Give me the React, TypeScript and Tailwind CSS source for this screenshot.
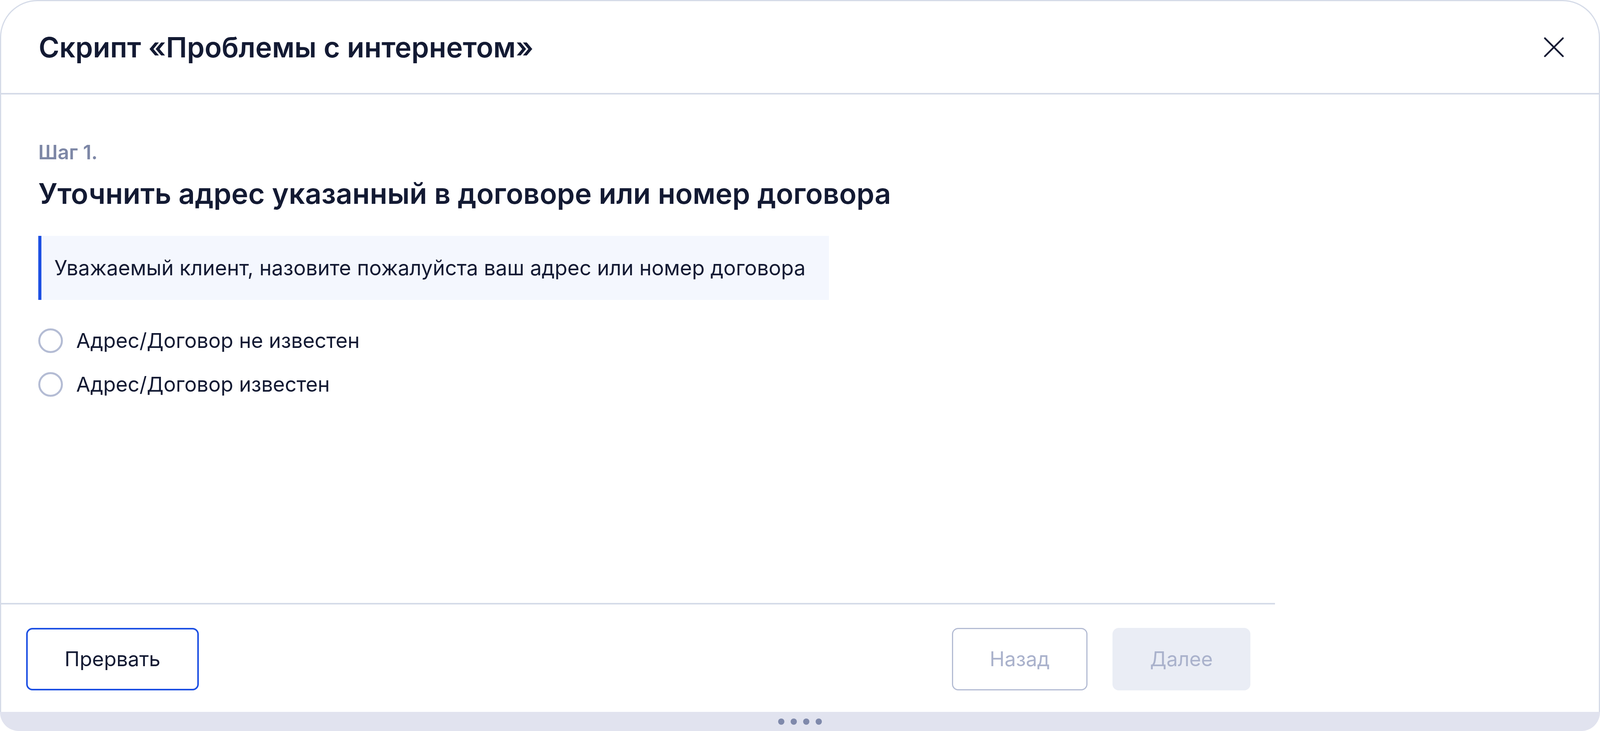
import React from 'react';

function Radio({ label }: { label: string }) {
  return (
    <div className="flex items-center gap-[34px] h-[64px]">
      <div className="w-[63px] h-[63px] rounded-full border-[5px] border-[#b4bcd4] bg-white shrink-0" />
      <span className="text-[52.5px] leading-[64px]">{label}</span>
    </div>
  );
}

export default function App() {
  return (
    <div className="relative h-[1872px] w-full bg-white font-[Inter,sans-serif] text-[#131a33] flex flex-col overflow-hidden">
      <div className="flex-1 min-h-0 flex flex-col border-x-[3px] border-t-[3px] border-[#d5dbe8] rounded-t-[96px] bg-white">
        <div className="h-[239px] shrink-0 border-b-[4px] border-[#d5dbe8] flex items-center justify-between pl-[96px] pr-[89px]">
          <h1 className="text-[72px] leading-[80px] font-semibold">Скрипт «Проблемы с интернетом»</h1>
          <svg width="52" height="52" viewBox="0 0 52 52" fill="none" stroke="#141a33" strokeWidth="4.5" strokeLinecap="round">
            <path d="M3 3L49 49M49 3L3 49" />
          </svg>
        </div>
        <div className="flex-1 min-h-0 pl-[95px] pt-[116px] flex flex-col items-start">
          <div className="text-[50.8px] leading-[64px] font-semibold text-[#7d87a6]">Шаг 1.</div>
          <div className="mt-[32px] text-[73px] leading-[84px] font-semibold">
            Уточнить адрес указанный в договоре или номер договора
          </div>
          <div className="mt-[66px] w-[2024px] h-[164px] border-l-[8px] border-[#1c4fe3] bg-[#f4f7fe] flex items-center pl-[33px]">
            <span className="text-[53px] leading-[64px]">
              Уважаемый клиент, назовите пожалуйста ваш адрес или номер договора
            </span>
          </div>
          <div className="mt-[72px] flex flex-col gap-[48px]">
            <Radio label="Адрес/Договор не известен" />
            <Radio label="Адрес/Договор известен" />
          </div>
        </div>
        <div className="w-[3261px] h-[279px] shrink-0 border-t-[4px] border-[#d5dbe8] flex items-start justify-between pt-[60px] pl-[64px] pr-[63px]">
          <button className="w-[442px] h-[160px] rounded-[16px] border-[4px] border-[#1c4fe3] bg-white text-[52px] text-[#131a33] flex items-center justify-center">
            Прервать
          </button>
          <div className="flex gap-[64px]">
            <button className="w-[347px] h-[160px] rounded-[16px] border-[3px] border-[#b3bbd3] bg-white text-[51.5px] text-[#aab2cc] flex items-center justify-center">
              Назад
            </button>
            <button className="w-[353px] h-[160px] rounded-[16px] bg-[#eaedf5] text-[51.5px] text-[#aab2cc] flex items-center justify-center">
              Далее
            </button>
          </div>
        </div>
      </div>
      <div className="h-[49px] shrink-0 bg-[#e1e3ef] rounded-b-[48px] flex items-center justify-center gap-[16px]">
        <div className="w-[16px] h-[16px] rounded-full bg-[#7f89ab]" />
        <div className="w-[16px] h-[16px] rounded-full bg-[#7f89ab]" />
        <div className="w-[16px] h-[16px] rounded-full bg-[#7f89ab]" />
        <div className="w-[16px] h-[16px] rounded-full bg-[#7f89ab]" />
      </div>
    </div>
  );
}
